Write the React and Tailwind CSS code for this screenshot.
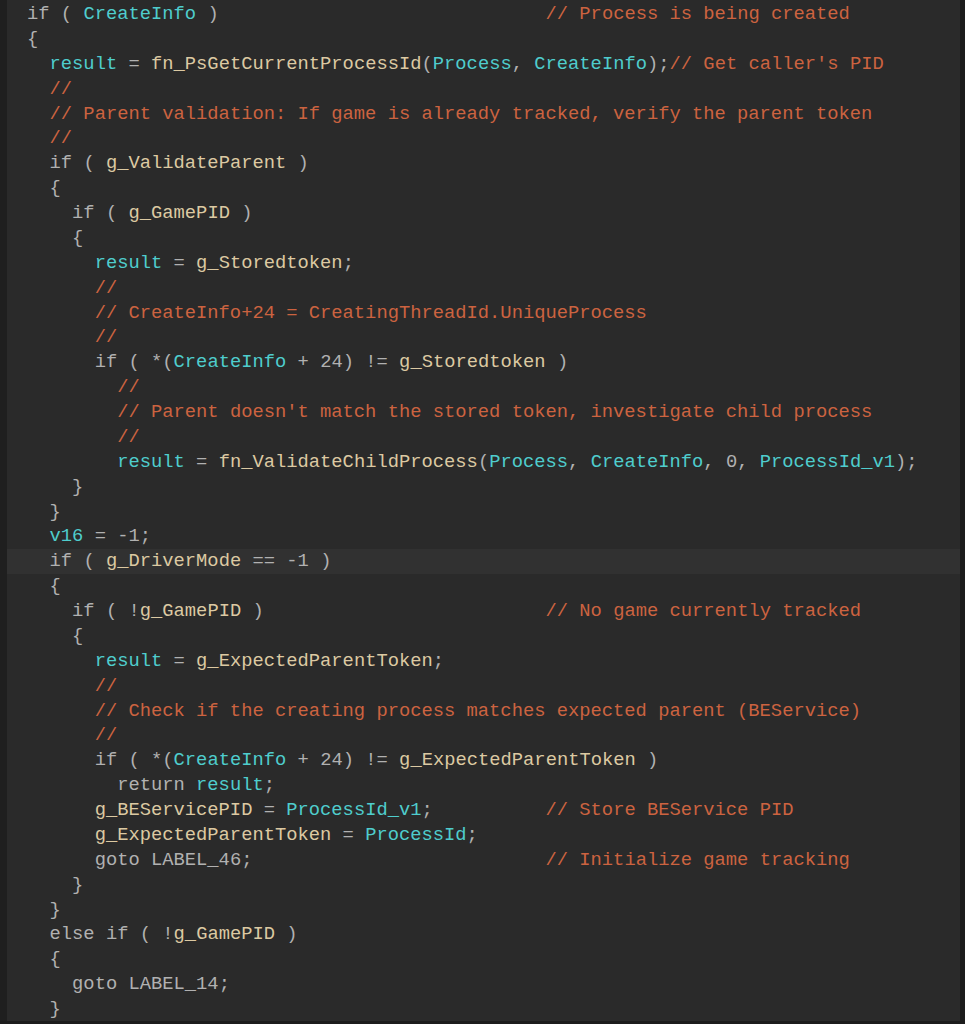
import React from 'react'

const CYAN = new Set(['CreateInfo', 'result', 'Process', 'ProcessId_v1', 'ProcessId', 'v16'])
const BEIGE = new Set([
  'fn_PsGetCurrentProcessId', 'g_ValidateParent', 'g_GamePID', 'g_Storedtoken',
  'fn_ValidateChildProcess', 'g_DriverMode', 'g_ExpectedParentToken', 'g_BEServicePID',
])

const pad = (s, note) => s.padEnd(46, ' ') + '// ' + note

const lines = [
  pad('if ( CreateInfo )', 'Process is being created'),
  '{',
  "  result = fn_PsGetCurrentProcessId(Process, CreateInfo);// Get caller's PID",
  '  //',
  '  // Parent validation: If game is already tracked, verify the parent token',
  '  //',
  '  if ( g_ValidateParent )',
  '  {',
  '    if ( g_GamePID )',
  '    {',
  '      result = g_Storedtoken;',
  '      //',
  '      // CreateInfo+24 = CreatingThreadId.UniqueProcess',
  '      //',
  '      if ( *(CreateInfo + 24) != g_Storedtoken )',
  '        //',
  "        // Parent doesn't match the stored token, investigate child process",
  '        //',
  '        result = fn_ValidateChildProcess(Process, CreateInfo, 0, ProcessId_v1);',
  '    }',
  '  }',
  '  v16 = -1;',
  '  if ( g_DriverMode == -1 )',
  '  {',
  pad('    if ( !g_GamePID )', 'No game currently tracked'),
  '    {',
  '      result = g_ExpectedParentToken;',
  '      //',
  '      // Check if the creating process matches expected parent (BEService)',
  '      //',
  '      if ( *(CreateInfo + 24) != g_ExpectedParentToken )',
  '        return result;',
  pad('      g_BEServicePID = ProcessId_v1;', 'Store BEService PID'),
  '      g_ExpectedParentToken = ProcessId;',
  pad('      goto LABEL_46;', 'Initialize game tracking'),
  '    }',
  '  }',
  '  else if ( !g_GamePID )',
  '  {',
  '    goto LABEL_14;',
  '  }',
]

const Line = ({ text }) => {
  const at = text.indexOf('//')
  const code = at >= 0 ? text.slice(0, at) : text
  const comment = at >= 0 ? text.slice(at) : ''
  const tokens = code.match(/[A-Za-z_][A-Za-z0-9_]*|\s+|./g) || []
  return (
    <>
      {tokens.map((t, i) =>
        CYAN.has(t) ? <span key={i} className="text-[#4fcdcd]">{t}</span>
          : BEIGE.has(t) ? <span key={i} className="text-[#dcc9a2]">{t}</span>
          : <span key={i}>{t}</span>
      )}
      {comment && <span className="text-[#cc6340]">{comment}</span>}
    </>
  )
}

export default function App() {
  return (
    <div className="flex h-[1024px] w-[965px] overflow-hidden border-b-[3px] border-[#1c1c1c] bg-[#2a2a2a]">
      <div className="w-[7px] shrink-0 bg-[#1f1f1f]" />
      <div className="flex-1 pt-[2px] font-['Liberation_Mono',monospace] text-[18.8px] leading-[24.875px] text-[#b1b1b1]">
        {lines.map((l, i) => (
          <div key={i} className={`whitespace-pre pl-[20px] ${i === 22 ? 'bg-[#313131]' : ''}`}>
            <Line text={l} />
          </div>
        ))}
      </div>
      <div className="w-[5px] shrink-0 bg-[#1c1c1c]" />
    </div>
  )
}
